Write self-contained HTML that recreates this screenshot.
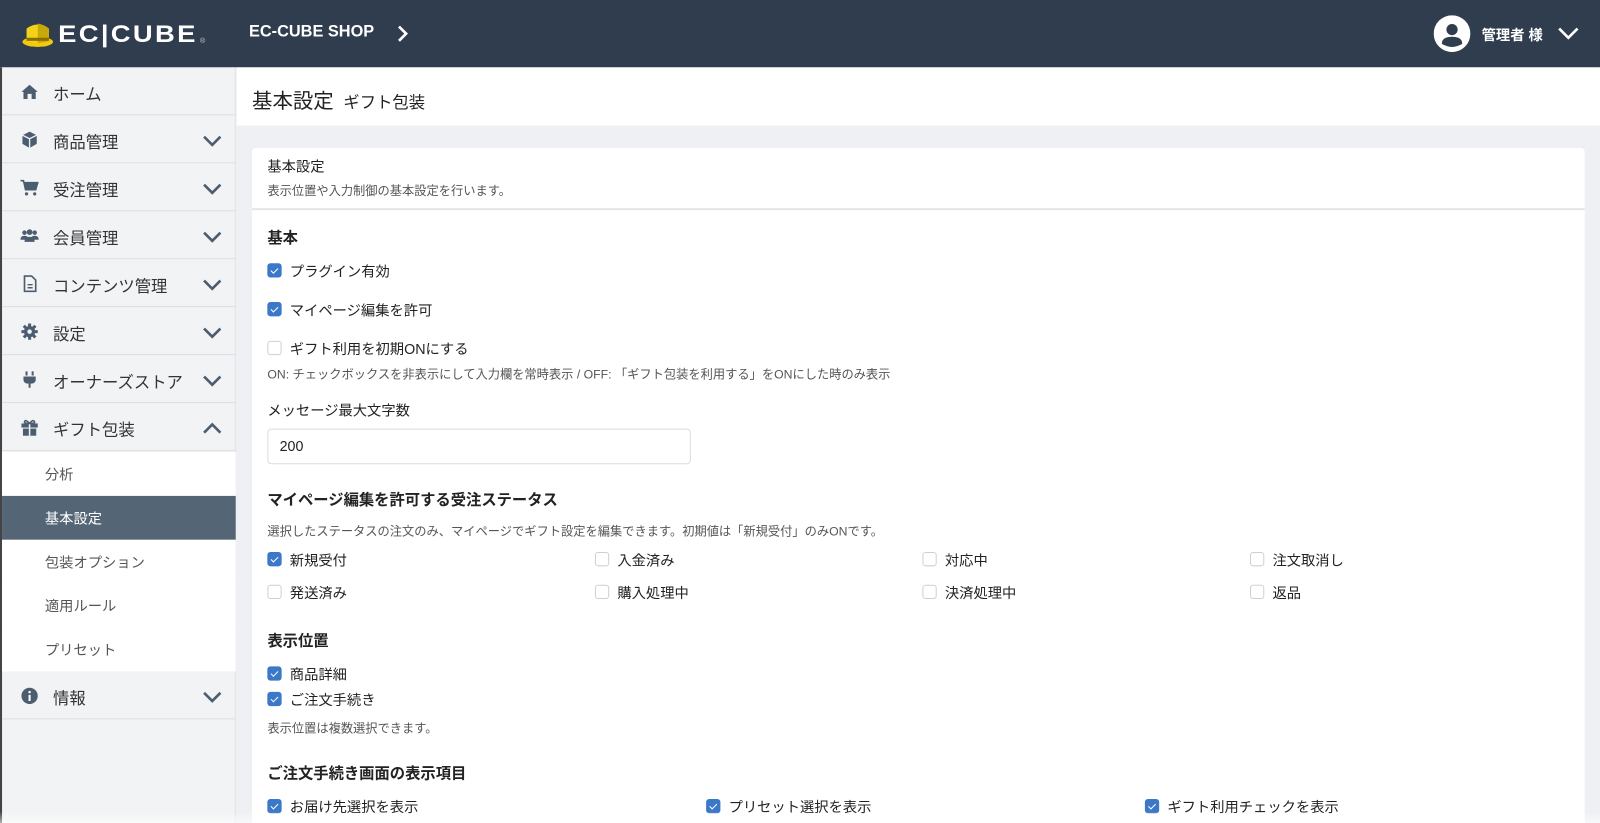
<!DOCTYPE html>
<html><head><meta charset="utf-8"><style>
*{box-sizing:border-box;margin:0;padding:0}
html,body{width:1600px;height:823px;overflow:hidden}
body{background:#eef0f3;font-family:"Liberation Sans","Noto Sans CJK JP",sans-serif;color:#222;position:relative}
#outer{position:absolute;left:0;top:0;width:1600px;height:823px;overflow:hidden}
#wrap{position:absolute;left:0;top:0;width:1568px;height:807px;overflow:hidden;transform:scale(1.0204);transform-origin:0 0}
.a{position:absolute;white-space:nowrap}
#hd{position:absolute;left:0;top:0;width:1568px;height:66px;background:#2f3d4e}
#sb{position:absolute;left:0;top:66px;width:231px;height:741px;background:#f2f3f5;border-right:1px solid #e0e2e6;border-left:2px solid #444}
.it{position:absolute;left:0;width:229px;height:47px;border-bottom:1px solid #dcdfe4;font-size:16px;color:#333}
.it .ic{position:absolute;left:18px;top:15px;width:18px;height:18px}
.it .t{position:absolute;left:50px;top:13px}
.it .ch{position:absolute;left:196px;top:18px}
.sub{position:absolute;left:0;width:229px;height:43px;background:#fff;font-size:14px;color:#555}
.sub span{position:absolute;left:42px;top:12px}
.cb{position:absolute;width:14px;height:14px;border-radius:3px;border:1px solid #ccd0d6;background:#fff}
.cb.on{background:#3b78c8;border-color:#3b78c8}
.cb.on:after{content:"";position:absolute;left:4px;top:1.5px;width:3px;height:6px;border:solid #fff;border-width:0 1.6px 1.6px 0;transform:rotate(45deg)}
.lb{font-size:14px;color:#222}
.h{font-size:15px;font-weight:bold;color:#222}
.note{font-size:12px;color:#555}
</style></head><body><div id="outer"><div id="wrap">
<div id="hd">
 <svg class="a" style="left:20px;top:20px" width="34" height="28" viewBox="0 0 34 28"><ellipse cx="17" cy="21" rx="15" ry="5" fill="#f3c90d"/><path d="M6 8 Q17 0 28 8 L28 20 Q17 24 6 20Z" fill="#f3d21a"/><path d="M17 3 Q23 4 28 8 L28 20 Q23 22 17 22Z" fill="#c9a90a"/><rect x="6" y="17" width="22" height="3" fill="#8a6d05"/></svg>
 <div class="a" style="left:57px;top:20px;font-size:24px;font-weight:bold;color:#fff;letter-spacing:2px;transform:scaleX(1.12);transform-origin:left">EC|CUBE</div>
 <div class="a" style="left:196px;top:37px;font-size:7px;color:#ccc">®</div>
 <div class="a" style="left:244px;top:23px;font-size:16px;font-weight:bold;color:#fff">EC-CUBE SHOP</div>
 <svg class="a" style="left:389px;top:24px" width="12" height="18"><path d="M2 2 L9 9 L2 16" stroke="#fff" stroke-width="2.6" fill="none"/></svg>
 <svg class="a" style="left:1405px;top:15px" width="36" height="36" viewBox="0 0 36 36"><circle cx="18" cy="18" r="18" fill="#fff"/><circle cx="18" cy="14" r="5.5" fill="#2f3d4e"/><path d="M8 28 Q8 21 18 21 Q28 21 28 28 Q23 31 18 31 Q13 31 8 28Z" fill="#2f3d4e"/></svg>
 <div class="a" style="left:1452px;top:24px;font-size:14px;font-weight:bold;color:#fff">管理者 様</div>
 <svg class="a" style="left:1526px;top:26px" width="22" height="14"><path d="M2 2 L11 11 L20 2" stroke="#fff" stroke-width="2.6" fill="none"/></svg>
</div>

<div id="sb">
 <div class="it" style="top:0"><svg class="ic" viewBox="0 0 18 18"><path d="M9 2 L1 9 H3 V16 H7 V11 H11 V16 H15 V9 H17Z" fill="#4d5d70"/></svg><span class="t">ホーム</span></div>
 <div class="it" style="top:47px"><svg class="ic" viewBox="0 0 18 18"><path d="M9 1 L16 4.5 V13 L9 17 L2 13 V4.5Z" fill="#4d5d70"/><path d="M2 4.5 L9 8 L16 4.5 M9 8 V17" stroke="#f2f3f5" stroke-width="1.3" fill="none"/></svg><span class="t">商品管理</span><svg class="ch" width="20" height="14"><path d="M2 3 L10 11 L18 3" stroke="#4d5d70" stroke-width="2.6" fill="none"/></svg></div>
 <div class="it" style="top:94px"><svg class="ic" viewBox="0 0 18 18"><path d="M0 2 H3 L5 11 H15 L17 4 H4" fill="#4d5d70" stroke="#4d5d70" stroke-width="1.5"/><circle cx="6" cy="15" r="1.6" fill="#4d5d70"/><circle cx="14" cy="15" r="1.6" fill="#4d5d70"/></svg><span class="t">受注管理</span><svg class="ch" width="20" height="14"><path d="M2 3 L10 11 L18 3" stroke="#4d5d70" stroke-width="2.6" fill="none"/></svg></div>
 <div class="it" style="top:141px"><svg class="ic" viewBox="0 0 18 18"><circle cx="4" cy="6" r="2.2" fill="#4d5d70"/><circle cx="14" cy="6" r="2.2" fill="#4d5d70"/><circle cx="9" cy="5.5" r="2.8" fill="#4d5d70"/><path d="M0 13 Q0 9 4 9 Q8 9 8 13Z M10 13 Q10 9 14 9 Q18 9 18 13Z M4 15 Q4 10 9 10 Q14 10 14 15Z" fill="#4d5d70"/></svg><span class="t">会員管理</span><svg class="ch" width="20" height="14"><path d="M2 3 L10 11 L18 3" stroke="#4d5d70" stroke-width="2.6" fill="none"/></svg></div>
 <div class="it" style="top:188px"><svg class="ic" viewBox="0 0 18 18"><path d="M4 1.5 H11 L15 5.5 V16.5 H4Z" stroke="#4d5d70" stroke-width="1.6" fill="none"/><path d="M7 10 H12 M7 13 H12" stroke="#4d5d70" stroke-width="1.4"/></svg><span class="t">コンテンツ管理</span><svg class="ch" width="20" height="14"><path d="M2 3 L10 11 L18 3" stroke="#4d5d70" stroke-width="2.6" fill="none"/></svg></div>
 <div class="it" style="top:235px"><svg class="ic" viewBox="0 0 18 18"><circle cx="9" cy="9" r="5.5" fill="#4d5d70"/><path d="M9 1 V17 M1 9 H17 M3.3 3.3 L14.7 14.7 M14.7 3.3 L3.3 14.7" stroke="#4d5d70" stroke-width="3"/><circle cx="9" cy="9" r="2.2" fill="#f2f3f5"/></svg><span class="t">設定</span><svg class="ch" width="20" height="14"><path d="M2 3 L10 11 L18 3" stroke="#4d5d70" stroke-width="2.6" fill="none"/></svg></div>
 <div class="it" style="top:282px"><svg class="ic" viewBox="0 0 18 18"><path d="M6 1 V5 M12 1 V5" stroke="#4d5d70" stroke-width="2"/><path d="M3 6 H15 V9 Q15 13 10 13 V17 H8 V13 Q3 13 3 9Z" fill="#4d5d70"/></svg><span class="t">オーナーズストア</span><svg class="ch" width="20" height="14"><path d="M2 3 L10 11 L18 3" stroke="#4d5d70" stroke-width="2.6" fill="none"/></svg></div>
 <div class="it" style="top:329px"><svg class="ic" viewBox="0 0 18 18"><rect x="1" y="5" width="16" height="4" fill="#4d5d70"/><rect x="2.5" y="10" width="13" height="7" fill="#4d5d70"/><path d="M9 5 V17" stroke="#f2f3f5" stroke-width="1.5"/><path d="M9 5 Q4 0 4 4 Q5 5 9 5 Q13 0 14 4 Q13 5 9 5" stroke="#4d5d70" stroke-width="1.5" fill="none"/></svg><span class="t">ギフト包装</span><svg class="ch" width="20" height="14"><path d="M2 11 L10 3 L18 11" stroke="#4d5d70" stroke-width="2.6" fill="none"/></svg></div>
 <div class="sub" style="top:377px"><span>分析</span></div>
 <div class="sub" style="top:420px;background:#546576;color:#fff"><span>基本設定</span></div>
 <div class="sub" style="top:463px"><span>包装オプション</span></div>
 <div class="sub" style="top:506px"><span>適用ルール</span></div>
 <div class="sub" style="top:549px"><span>プリセット</span></div>
 <div class="it" style="top:592px;height:47px"><svg class="ic" viewBox="0 0 18 18"><circle cx="9" cy="9" r="8" fill="#4d5d70"/><rect x="8" y="8" width="2" height="6" fill="#fff"/><circle cx="9" cy="5.3" r="1.2" fill="#fff"/></svg><span class="t">情報</span><svg class="ch" width="20" height="14"><path d="M2 3 L10 11 L18 3" stroke="#4d5d70" stroke-width="2.6" fill="none"/></svg></div>
</div>

<div class="a" style="left:232px;top:66px;width:1336px;height:57px;background:#fff"></div>
<div class="a" style="left:247px;top:83px;font-size:20px;color:#222">基本設定 <span style="font-size:16px;margin-left:4px">ギフト包装</span></div>

<div class="a" style="left:247px;top:145px;width:1306px;height:662px;background:#fff;border-radius:4px 4px 0 0"></div>
<div class="a" style="left:247px;top:204px;width:1306px;height:2px;background:#e3e5e9"></div>
<div class="a" style="left:262px;top:153px;font-size:14px">基本設定</div>
<div class="a note" style="left:262px;top:178px">表示位置や入力制御の基本設定を行います。</div>

<div class="a h" style="left:262px;top:222px">基本</div>
<div class="cb on" style="left:262px;top:258px"></div><div class="a lb" style="left:284px;top:256px">プラグイン有効</div>
<div class="cb on" style="left:262px;top:296px"></div><div class="a lb" style="left:284px;top:294px">マイページ編集を許可</div>
<div class="cb" style="left:262px;top:334px"></div><div class="a lb" style="left:284px;top:332px">ギフト利用を初期ONにする</div>
<div class="a note" style="left:262px;top:358px">ON: チェックボックスを非表示にして入力欄を常時表示 / OFF: 「ギフト包装を利用する」をONにした時のみ表示</div>

<div class="a lb" style="left:262px;top:392px">メッセージ最大文字数</div>
<div class="a" style="left:262px;top:420px;width:415px;height:35px;border:1px solid #d8dbe0;border-radius:4px;font-size:14px;padding:8px 11px">200</div>

<div class="a h" style="left:262px;top:479px">マイページ編集を許可する受注ステータス</div>
<div class="a note" style="left:262px;top:512px">選択したステータスの注文のみ、マイページでギフト設定を編集できます。初期値は「新規受付」のみONです。</div>
<div class="cb on" style="left:262px;top:541px"></div><div class="a lb" style="left:284px;top:539px">新規受付</div>
<div class="cb" style="left:583px;top:541px"></div><div class="a lb" style="left:605px;top:539px">入金済み</div>
<div class="cb" style="left:904px;top:541px"></div><div class="a lb" style="left:926px;top:539px">対応中</div>
<div class="cb" style="left:1225px;top:541px"></div><div class="a lb" style="left:1247px;top:539px">注文取消し</div>
<div class="cb" style="left:262px;top:573px"></div><div class="a lb" style="left:284px;top:571px">発送済み</div>
<div class="cb" style="left:583px;top:573px"></div><div class="a lb" style="left:605px;top:571px">購入処理中</div>
<div class="cb" style="left:904px;top:573px"></div><div class="a lb" style="left:926px;top:571px">決済処理中</div>
<div class="cb" style="left:1225px;top:573px"></div><div class="a lb" style="left:1247px;top:571px">返品</div>

<div class="a h" style="left:262px;top:617px">表示位置</div>
<div class="cb on" style="left:262px;top:653px"></div><div class="a lb" style="left:284px;top:651px">商品詳細</div>
<div class="cb on" style="left:262px;top:678px"></div><div class="a lb" style="left:284px;top:676px">ご注文手続き</div>
<div class="a note" style="left:262px;top:705px">表示位置は複数選択できます。</div>

<div class="a h" style="left:262px;top:747px">ご注文手続き画面の表示項目</div>
<div class="cb on" style="left:262px;top:783px"></div><div class="a lb" style="left:284px;top:781px">お届け先選択を表示</div>
<div class="cb on" style="left:692px;top:783px"></div><div class="a lb" style="left:714px;top:781px">プリセット選択を表示</div>
<div class="cb on" style="left:1122px;top:783px"></div><div class="a lb" style="left:1144px;top:781px">ギフト利用チェックを表示</div>
<div class="a" style="left:0;top:795px;width:1568px;height:12px;background:linear-gradient(rgba(255,255,255,0),rgba(255,255,255,0.6))"></div>
</div></div></body></html>
